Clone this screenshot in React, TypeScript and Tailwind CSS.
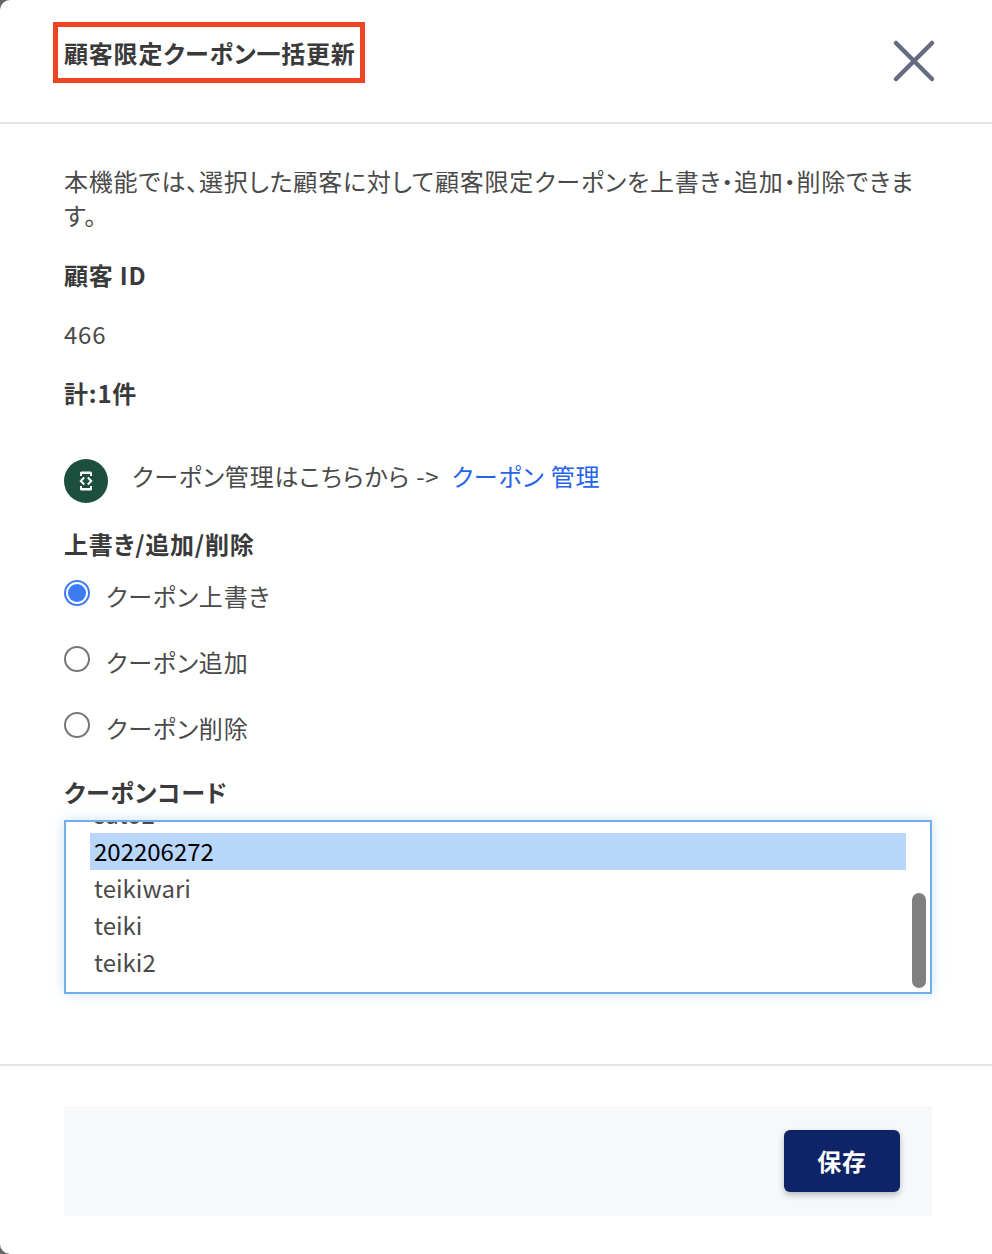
import { X } from 'lucide-react';

const FONT = "font-['Noto_Sans_CJK_JP','Noto_Sans',sans-serif] [font-feature-settings:'palt'] tracking-[0.8px]";

const RADIOS = [
  { label: 'クーポン上書き', checked: true },
  { label: 'クーポン追加', checked: false },
  { label: 'クーポン削除', checked: false },
];

const CODES = ['teikiwari', 'teiki', 'teiki2'];

function Radio({ label, checked }: { label: string; checked: boolean }) {
  return (
    <label className="flex h-[66px] items-start">
      {checked ? (
        <span className="mt-[2px] flex h-[26px] w-[26px] items-center justify-center rounded-full border-2 border-[#3b7bf6]">
          <span className="h-[18px] w-[18px] rounded-full bg-[#3b7bf6]" />
        </span>
      ) : (
        <span className="mt-[2px] h-[26px] w-[26px] rounded-full border-2 border-[#767676]" />
      )}
      <span className="ml-[16px] mt-[1px] text-[24px] leading-[34px] text-[#4a4a4a]">{label}</span>
    </label>
  );
}

export default function App() {
  return (
    <div className={`h-[1254px] w-[992px] overflow-hidden bg-[#666666] ${FONT}`}>
      <div className="flex h-full flex-col rounded-l-[10px] bg-white">
        <header className="relative flex h-[124px] shrink-0 items-start border-b-2 border-[#e4e4e4] pl-[53px] pt-[22px]">
          <h2 className="flex h-[61px] w-[312px] items-center border-[5px] border-[#ee4426] pl-[6px] text-[24px] font-bold leading-none text-[#3a3a3a]">
            顧客限定クーポン一括更新
          </h2>
          <button aria-label="閉じる" className="absolute left-[878px] top-[25px] text-[#666b80]">
            <X className="h-[72px] w-[72px]" strokeWidth={1.5} />
          </button>
        </header>

        <div className="flex-1 pl-[64px] pr-[60px] pt-[40px]">
          <p className="text-[24px] leading-[34px] text-[#4a4a4a]">
            本機能では、選択した顧客に対して顧客限定クーポンを上書き・追加・削除できます。
          </p>
          <p className="mt-[26px] text-[24px] font-bold leading-[34px] text-[#3a3a3a]">顧客 ID</p>
          <p className="mt-[25px] text-[24px] leading-[34px] text-[#4a4a4a]">466</p>
          <p className="mt-[25px] text-[24px] font-bold leading-[34px] text-[#3a3a3a]">計:1件</p>

          <div className="mt-[49px] flex items-center">
            <span className="flex h-[44px] w-[44px] items-center justify-center rounded-full bg-[#1d4f3e]">
              <svg width="14" height="20" viewBox="0 0 14 20" fill="none">
                <path d="M1 5V2a1.5 1.5 0 0 1 1.5-1.5h9A1.5 1.5 0 0 1 13 2v3Z" fill="#fff" />
                <path d="M1 15v3a1.5 1.5 0 0 0 1.5 1.5h9A1.5 1.5 0 0 0 13 18v-3Z" fill="#fff" />
                <rect x="3" y="3" width="8" height="14" fill="#1d4f3e" />
                <rect x="0" y="5" width="14" height="10" fill="#1d4f3e" />
                <path d="M5.2 6.5 L1.8 10 L5.2 13.5 M8.8 6.5 L12.2 10 L8.8 13.5" stroke="#fff" strokeWidth="2" />
              </svg>
            </span>
            <p className="ml-[24px] -translate-y-[5px] text-[24px] leading-[34px] text-[#4a4a4a]">
              クーポン管理はこちらから -&gt; <a className="ml-[6px] text-[#2563eb]">クーポン 管理</a>
            </p>
          </div>

          <p className="mt-[24px] text-[24px] font-bold leading-[34px] text-[#3a3a3a]">上書き/追加/削除</p>
          <div className="mt-[17px]">
            {RADIOS.map((r) => (
              <Radio key={r.label} label={r.label} checked={r.checked} />
            ))}
          </div>

          <p className="-mt-[1px] text-[24px] font-bold leading-[34px] text-[#3a3a3a]">クーポンコード</p>
          <div className="relative mt-[11px] h-[174px] overflow-hidden border-2 border-[#74aee8] pl-[24px] pr-[24px] tracking-normal shadow-[0_0_12px_rgba(116,174,232,0.35)]">
            <p className="-mt-[26px] h-[37px] px-[4px] text-[24px] leading-[35px] text-[#4a4a4a]">sato2</p>
            <p className="h-[37px] bg-[#b8d5fa] px-[4px] text-[24px] leading-[35px] text-black">202206272</p>
            {CODES.map((c) => (
              <p key={c} className="h-[37px] px-[4px] text-[24px] leading-[35px] text-[#4a4a4a]">{c}</p>
            ))}
            <span className="absolute right-[4px] top-[71px] h-[95px] w-[14px] rounded-full bg-[#808080]" />
          </div>
        </div>

        <footer className="h-[190px] shrink-0 border-t-2 border-[#e4e4e4] pl-[64px] pr-[60px] pt-[40px]">
          <div className="flex h-[110px] items-start justify-end bg-[#f7f8fa] pr-[32px] pt-[24px]">
            <button className="h-[62px] w-[116px] rounded-[6px] bg-[#0f2467] text-[24px] font-bold text-white shadow-[0_3px_6px_rgba(0,0,0,0.25)]">
              保存
            </button>
          </div>
        </footer>
      </div>
    </div>
  );
}
